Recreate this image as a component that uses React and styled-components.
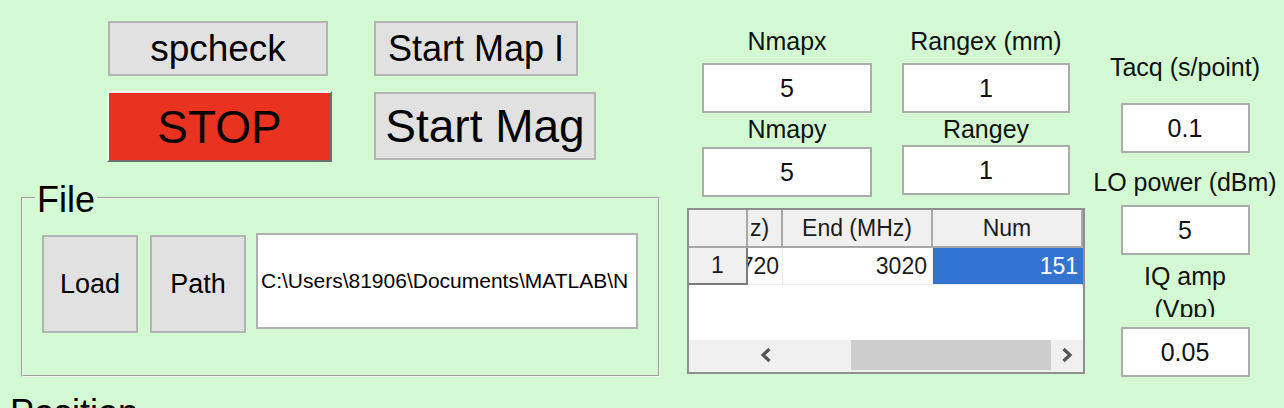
import React from 'react';
import styled, { createGlobalStyle } from 'styled-components';

const GlobalStyle = createGlobalStyle`
  html, body {
    margin: 0;
    padding: 0;
    background: #d3fad3;
  }
  body {
    font-family: "Liberation Sans", Arial, sans-serif;
    color: #000;
    overflow: hidden;
  }
`;

const Screen = styled.div`
  display: flex;
  width: 1284px;
  height: 408px;
  overflow: hidden;
  background: #d3fad3;
`;

const LeftPane = styled.div`
  width: 686px;
  flex: none;
  display: flex;
  flex-direction: column;
  & > * {
    flex: none;
  }
`;

const ButtonGrid = styled.div`
  display: flex;
  gap: 42px;
  padding: 21px 0 0 107px;
`;

const ButtonColumn = styled.div`
  display: flex;
  flex-direction: column;
  align-items: flex-start;
  gap: ${p => p.$gap}px;
`;

const PushButton = styled.button`
  width: ${p => p.$w}px;
  height: ${p => p.$h}px;
  margin-left: ${p => p.$indent || 0}px;
  padding: 0;
  box-sizing: border-box;
  font-family: "Liberation Sans", Arial, sans-serif;
  font-size: ${p => p.$size}px;
  line-height: 1;
  color: #000;
  background: #e1e1e1;
  border: 2px solid #b3b3b3;
  white-space: nowrap;
  overflow: hidden;
  cursor: default;
`;

const StopButton = styled(PushButton)`
  background: #e9321f;
  border-top: 2px solid #f4f4f4;
  border-left: 2px solid #f4f4f4;
  border-right: 2px solid #6d6d6d;
  border-bottom: 2px solid #6d6d6d;
`;

const FilePanel = styled.fieldset`
  margin: 16px 0 0 21px;
  width: 639px;
  height: 199px;
  box-sizing: border-box;
  padding: 0;
  border: 2px groove #f2f2f2;
  min-width: 0;
`;

const PanelTitle = styled.legend`
  font-size: 36px;
  line-height: 36px;
  padding: 4px 2px 0;
  margin-left: 12px;
`;

const FileRow = styled.div`
  display: flex;
  align-items: flex-start;
  gap: 12px;
  padding: 17px 0 0 19px;
`;

const PathField = styled.div`
  width: 382px;
  height: 96px;
  margin: -2px 0 0 -2px;
  box-sizing: border-box;
  background: #fff;
  border: 2px solid #b0b0b0;
  padding-left: 3px;
  display: flex;
  align-items: center;
  font-size: 21px;
  white-space: nowrap;
  overflow: hidden;
`;

const NextPanelTitle = styled.div`
  margin: 18px 0 0 10px;
  font-size: 36px;
  line-height: 36px;
  white-space: nowrap;
`;

const MiddlePane = styled.div`
  width: 400px;
  flex: none;
  display: flex;
  flex-direction: column;
`;

const FieldGrid = styled.div`
  display: grid;
  grid-template-columns: 170px 168px;
  column-gap: 30px;
  row-gap: 2px;
  padding: 27px 0 0 16px;
`;

const Field = styled.div`
  display: flex;
  flex-direction: column;
  align-items: stretch;
  text-align: center;
`;

const FieldLabel = styled.div`
  font-size: 25px;
  line-height: ${p => p.$lh || 29}px;
  height: ${p => p.$h || 29}px;
  width: ${p => (p.$w ? `${p.$w}px` : 'auto')};
  margin-top: ${p => p.$top || 0}px;
  text-align: center;
  white-space: ${p => (p.$w ? 'normal' : 'nowrap')};
  overflow: hidden;
  color: #111;
`;

const ValueBox = styled.div`
  width: ${p => (p.$w ? `${p.$w}px` : '100%')};
  height: 50px;
  margin-top: ${p => p.$gap}px;
  box-sizing: border-box;
  background: #fff;
  border: 2px solid #acacac;
  display: flex;
  align-items: center;
  justify-content: center;
  font-size: 25px;
  color: #111;
`;

const Table = styled.div`
  margin: 11px 0 0 1px;
  width: 398px;
  height: 166px;
  box-sizing: border-box;
  border: 2px solid #8f8f8f;
  background: #fff;
  display: grid;
  grid-template-columns: 59px 35px 150px 1fr;
  grid-template-rows: 38px 37px 1fr 32px;
  overflow: hidden;
`;

const HeadCell = styled.div`
  background: #f0f0f0;
  border-right: 2px solid #a8a8a8;
  border-bottom: 2px solid #a8a8a8;
  display: flex;
  align-items: center;
  justify-content: ${p => p.$align || 'center'};
  padding-left: ${p => (p.$align ? 2 : 0)}px;
  font-size: 23px;
  color: #1b1b1b;
  overflow: hidden;
  white-space: nowrap;
`;

const RowHead = styled.div`
  background: #f0f0f0;
  border-right: 2px solid #7a7a7a;
  border-bottom: 2px solid #7a7a7a;
  display: flex;
  align-items: center;
  justify-content: center;
  font-size: 23px;
  color: #1b1b1b;
`;

const DataCell = styled.div`
  background: ${p => (p.$selected ? '#3474d1' : '#fff')};
  color: ${p => (p.$selected ? '#fff' : '#1b1b1b')};
  border-right: 1px solid ${p => (p.$selected ? '#3474d1' : '#ececec')};
  border-bottom: 1px solid #ececec;
  display: flex;
  align-items: center;
  justify-content: flex-end;
  padding-right: ${p => p.$pad}px;
  font-size: 23px;
  overflow: hidden;
  white-space: nowrap;
`;

const EmptyRows = styled.div`
  grid-column: 1 / -1;
  background: #fff;
`;

const ScrollBar = styled.div`
  grid-column: 1 / -1;
  display: flex;
  background: #f0f0f0;
  padding-bottom: 2px;
`;

const ScrollArrow = styled.div`
  width: ${p => p.$w}px;
  flex: none;
  display: flex;
  align-items: center;
  justify-content: center;
`;

const ScrollTrack = styled.div`
  flex: 1;
  display: flex;
  justify-content: flex-end;
`;

const ScrollThumb = styled.div`
  width: 200px;
  background: #cdcdcd;
`;

const RightPane = styled.div`
  flex: 1;
  display: flex;
  flex-direction: column;
  align-items: center;
  padding-top: 53px;
`;

const Chevron = ({ dir }) => (
  <svg width="14" height="18" viewBox="0 0 14 18">
    <path
      d={dir === 'left' ? 'M10.5 3 L4 9 L10.5 15' : 'M3.5 3 L10 9 L3.5 15'}
      fill="none"
      stroke="#555"
      strokeWidth="3.2"
    />
  </svg>
);

export default function App() {
  return (
    <>
      <GlobalStyle />
      <Screen>
        <LeftPane>
          <ButtonGrid>
            <ButtonColumn $gap={15}>
              <PushButton $w={220} $h={55} $size={37} $indent={1}>spcheck</PushButton>
              <StopButton $w={225} $h={71} $size={46}>STOP</StopButton>
            </ButtonColumn>
            <ButtonColumn $gap={16}>
              <PushButton $w={204} $h={55} $size={36}>Start Map I</PushButton>
              <PushButton $w={222} $h={68} $size={46}>Start Mag</PushButton>
            </ButtonColumn>
          </ButtonGrid>

          <FilePanel>
            <PanelTitle>File</PanelTitle>
            <FileRow>
              <PushButton $w={96} $h={98} $size={27}>Load</PushButton>
              <PushButton $w={96} $h={98} $size={27}>Path</PushButton>
              <PathField>C:\Users\81906\Documents\MATLAB\N</PathField>
            </FileRow>
          </FilePanel>

          <NextPanelTitle>Position</NextPanelTitle>
        </LeftPane>

        <MiddlePane>
          <FieldGrid>
            <Field>
              <FieldLabel>Nmapx</FieldLabel>
              <ValueBox $gap={7}>5</ValueBox>
            </Field>
            <Field>
              <FieldLabel>Rangex (mm)</FieldLabel>
              <ValueBox $gap={7}>1</ValueBox>
            </Field>
            <Field>
              <FieldLabel>Nmapy</FieldLabel>
              <ValueBox $gap={3}>5</ValueBox>
            </Field>
            <Field>
              <FieldLabel>Rangey</FieldLabel>
              <ValueBox $gap={1}>1</ValueBox>
            </Field>
          </FieldGrid>

          <Table>
            <HeadCell />
            <HeadCell $align="flex-start">z)</HeadCell>
            <HeadCell>End (MHz)</HeadCell>
            <HeadCell>Num</HeadCell>

            <RowHead>1</RowHead>
            <DataCell $pad={3}>720</DataCell>
            <DataCell $pad={5}>3020</DataCell>
            <DataCell $pad={4} $selected>151</DataCell>

            <EmptyRows />

            <ScrollBar>
              <ScrollArrow $w={59} />
              <ScrollArrow $w={35}>
                <Chevron dir="left" />
              </ScrollArrow>
              <ScrollTrack>
                <ScrollThumb />
              </ScrollTrack>
              <ScrollArrow $w={32}>
                <Chevron dir="right" />
              </ScrollArrow>
            </ScrollBar>
          </Table>
        </MiddlePane>

        <RightPane>
          <FieldLabel>Tacq (s/point)</FieldLabel>
          <ValueBox $w={129} $gap={21}>0.1</ValueBox>
          <FieldLabel $top={15}>LO power (dBm)</FieldLabel>
          <ValueBox $w={129} $gap={8}>5</ValueBox>
          <FieldLabel $top={5} $w={140} $lh={33} $h={57}>IQ amp (Vpp)</FieldLabel>
          <ValueBox $w={129} $gap={10}>0.05</ValueBox>
        </RightPane>
      </Screen>
    </>
  );
}
